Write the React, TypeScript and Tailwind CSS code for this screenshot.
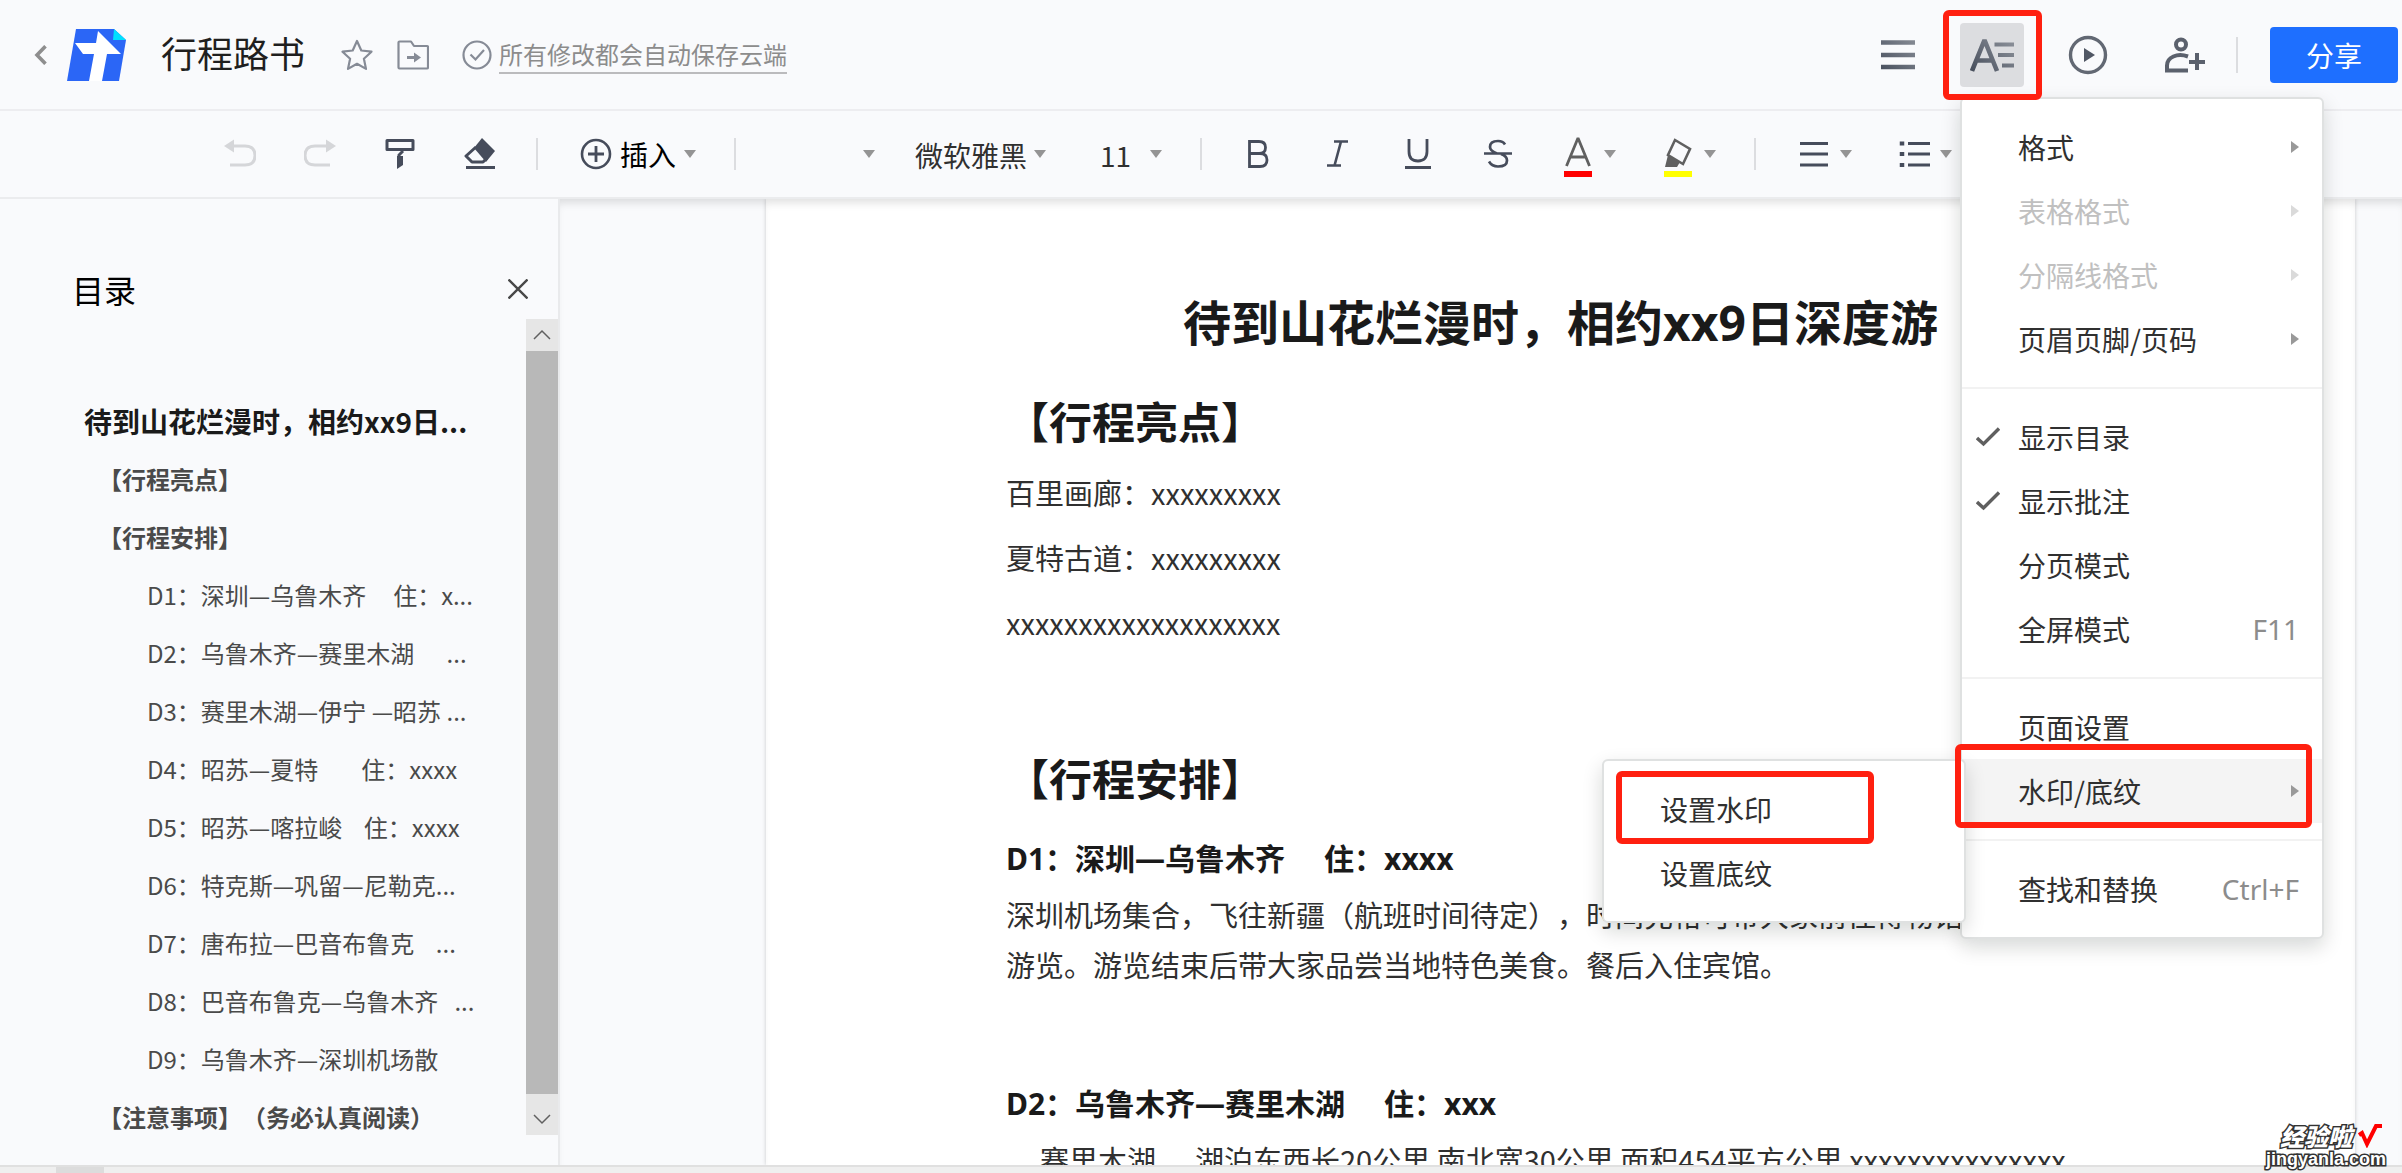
import type { ReactNode } from "react";

const outline = [
  { level: 1, text: "待到山花烂漫时，相约xx9日..." },
  { level: 2, text: "【行程亮点】" },
  { level: 2, text: "【行程安排】" },
  { level: 3, text: "D1：深圳—乌鲁木齐     住：x..." },
  { level: 3, text: "D2：乌鲁木齐—赛里木湖      ..." },
  { level: 3, text: "D3：赛里木湖—伊宁 —昭苏 ..." },
  { level: 3, text: "D4：昭苏—夏特        住：xxxx" },
  { level: 3, text: "D5：昭苏—喀拉峻    住：xxxx" },
  { level: 3, text: "D6：特克斯—巩留—尼勒克..." },
  { level: 3, text: "D7：唐布拉—巴音布鲁克    ..." },
  { level: 3, text: "D8：巴音布鲁克—乌鲁木齐   ..." },
  { level: 3, text: "D9：乌鲁木齐—深圳机场散" },
  { level: 2, text: "【注意事项】（务必认真阅读）" },
];

const outlineStyle: Record<number, string> = {
  1: "pl-[84px] text-[28px] font-bold text-[#1a1a1a]",
  2: "pl-[98px] text-2xl font-bold text-[#4a4a4a]",
  3: "pl-[147px] text-2xl text-[#4a4a4a]",
};

function Caret() {
  return (
    <svg viewBox="0 0 12 8" className="h-2 w-3 shrink-0" fill="#949494" aria-hidden="true">
      <path d="M0 0h12L6 8z" />
    </svg>
  );
}

function Divider({ className }: { className: string }) {
  return <div className={`h-8 w-0.5 shrink-0 bg-[#dcdde0] ${className}`} />;
}

function Icon({ children, color = "#464c5b" }: { children: ReactNode; color?: string }) {
  return (
    <svg viewBox="0 0 32 32" className="size-8 shrink-0" fill="none" stroke={color} strokeWidth="3" aria-hidden="true">
      {children}
    </svg>
  );
}

function ToolButton({ label, children }: { label: string; children: ReactNode }) {
  return (
    <button type="button" aria-label={label} className="flex h-16 w-16 shrink-0 items-center justify-center">
      {children}
    </button>
  );
}

function ColorTool({ label, children }: { label: string; children: ReactNode }) {
  return (
    <button type="button" aria-label={label} className="flex h-16 shrink-0 items-center gap-2.5">
      {children}
      <Caret />
    </button>
  );
}

function Header() {
  return (
    <header className="flex h-[111px] shrink-0 items-center border-b-2 border-[#ededf0] pr-1 pl-[34px]">
      <button type="button" aria-label="返回" className="mr-5 shrink-0">
        <svg viewBox="0 0 13 20" className="h-5 w-[13px]" fill="none" stroke="#8e8e8e" strokeWidth="3.6">
          <path d="M11.5 1.2 3 10l8.500 8.800" />
        </svg>
      </button>
      <svg viewBox="0 0 60 52" className="h-[52px] w-[60px] shrink-0" aria-hidden="true">
        <path d="M9 0h38l12 11-7 41H0z" fill="#2b66f6" />
        <path d="M47 0l12 11H46z" fill="#00e0ff" />
        <path d="M31 2l23 23H40l-5 27H22l5-27H16L8 14h21z" fill="#fff" />
      </svg>
      <h1 className="mr-9 ml-[34px] pb-1.5 text-[36px] leading-[48px] whitespace-nowrap text-[#1f1f1f]">行程路书</h1>
      <button type="button" aria-label="收藏" className="shrink-0">
        <svg viewBox="0 0 32 32" className="size-8" fill="none" stroke="#868b96" strokeWidth="2.200" strokeLinejoin="round">
          <path d="M16 2l4.300 9.500 10.200 1.200-7.600 7 2.100 10.200L16 24.800 7 29.900l2.100-10.200-7.600-7 10.200-1.200z" />
        </svg>
      </button>
      <button type="button" aria-label="移动到文件夹" className="ml-6 shrink-0">
        <svg viewBox="0 0 32 32" className="size-8" fill="none" stroke="#868b96" strokeWidth="2.200" strokeLinejoin="round">
          <path d="M1.500 3.500q0-1 1-1H14l3 4.500h13q1 0 1 1v20.500q0 1-1 1H2.500q-1 0-1-1z" />
          <path d="M10 18.500h8" strokeWidth="3" />
          <path d="M17 13.500v10l7-5z" fill="#868b96" stroke="none" />
        </svg>
      </button>
      <svg viewBox="0 0 32 32" className="ml-8 size-8 shrink-0" fill="none" stroke="#868b96" strokeWidth="2.200" aria-hidden="true">
        <circle cx="16" cy="16" r="13.500" />
        <path d="M9.500 15.500l5 5 8.500-9.500" />
      </svg>
      <a href="#history" className="ml-1.5 border-b-2 border-[#bbbbbd] text-2xl leading-[36px] whitespace-nowrap text-[#8c8c8c]">
        所有修改都会自动保存云端
      </a>

      <div className="ml-auto flex shrink-0 items-center">
        <button type="button" aria-label="菜单" className="mr-11 shrink-0">
          <svg viewBox="0 0 36 32" className="h-8 w-9" fill="none" strokeWidth="4.500">
            <defs>
              <linearGradient id="ink" gradientUnits="userSpaceOnUse" x1="0" y1="36" x2="36" y2="0">
                <stop offset="0" stopColor="#434b59" />
                <stop offset="1" stopColor="#888d96" />
              </linearGradient>
            </defs>
            <path d="M1 3.500h34M1 16h34M1 28h34" stroke="url(#ink)" />
          </svg>
        </button>
        <div className="relative mr-10 shrink-0">
          <button type="button" aria-label="格式菜单" aria-expanded="true" className="flex size-16 items-center justify-center rounded bg-[#dcdde0]">
            <svg viewBox="0 0 44 36" className="h-9 w-11" fill="none" stroke="url(#ink)">
              <path d="M2 34 14.500 3 27 34M7 23.500h15" strokeWidth="4.600" strokeLinejoin="bevel" />
              <path d="M24.500 7.500H44M28 18h16M32 28.500h12" strokeWidth="4.200" />
            </svg>
          </button>
          <div className="absolute top-[74px] left-0 z-20 w-[364px]">
            <FormatMenu />
          </div>
          <Mark className="-top-[13px] -left-[17px] z-30 h-[90px] w-[99px]" />
        </div>
        <button type="button" aria-label="播放" className="mr-[52px] shrink-0">
          <svg viewBox="0 0 48 48" className="size-12" fill="none">
            <circle cx="24" cy="24" r="17.500" stroke="#626873" strokeWidth="3.400" />
            <path d="M20 17v14l11-7z" fill="#505764" />
          </svg>
        </button>
        <button type="button" aria-label="邀请协作者" className="mr-[30px] shrink-0">
          <svg viewBox="0 0 42 38" className="h-[38px] w-[42px]" fill="none" stroke="#5b616d" strokeWidth="4">
            <circle cx="17" cy="8.500" r="5" />
            <path d="M24 20.500c-11-4-21 1-21 9v5h21M33 17v17M25 26h16" />
          </svg>
        </button>
        <div className="mr-8 h-9 w-0.5 bg-[#dcdde0]" />
        <button type="button" className="h-14 w-32 rounded bg-[#1e6fff] text-[28px] text-white">
          分享
        </button>
      </div>
    </header>
  );
}

function Mark({ className }: { className: string }) {
  return <div className={`pointer-events-none absolute rounded-md border-6 border-[#ff2010] ${className}`} />;
}

type Item = { label: string; arrow?: boolean; disabled?: boolean; checked?: boolean; shortcut?: string; active?: boolean };

const sections: Item[][] = [
  [
    { label: "格式", arrow: true },
    { label: "表格格式", arrow: true, disabled: true },
    { label: "分隔线格式", arrow: true, disabled: true },
    { label: "页眉页脚/页码", arrow: true },
  ],
  [
    { label: "显示目录", checked: true },
    { label: "显示批注", checked: true },
    { label: "分页模式" },
    { label: "全屏模式", shortcut: "F11" },
  ],
  [{ label: "页面设置" }, { label: "水印/底纹", arrow: true, active: true }],
  [{ label: "查找和替换", shortcut: "Ctrl+F" }],
];

const panel = "rounded-md border-2 border-[#dfe1e1] bg-white shadow-[0_8px_20px_rgba(0,20,10,0.16)]";

function MenuItem({ item }: { item: Item }) {
  return (
    <button
      type="button"
      role="menuitem"
      disabled={item.disabled}
      className={`flex h-16 w-full items-center pr-[23px] pl-3.5 text-[28px] ${item.active ? "bg-[#f4f4f4]" : ""} ${item.disabled ? "text-[#c0c0c0]" : "text-[#303030]"}`}
    >
      <span className="w-[42px] shrink-0">
        {item.checked && (
          <svg viewBox="0 0 24 20" className="h-5 w-6" fill="none" stroke="#5f5f5f" strokeWidth="3.400">
            <path d="M1 11l6.500 6L23 1.500" />
          </svg>
        )}
      </span>
      <span className="whitespace-nowrap">{item.label}</span>
      {item.shortcut && <span className='ml-auto font-["Noto_Sans",sans-serif] text-[#8c8c8c]'>{item.shortcut}</span>}
      {item.arrow && (
        <svg viewBox="0 0 8 12" className="ml-auto h-3 w-2" fill={item.disabled ? "#dadada" : "#999"} aria-hidden="true">
          <path d="M0 0l8 6-8 6z" />
        </svg>
      )}
    </button>
  );
}

function FormatMenu() {
  return (
    <div role="menu" className={`${panel} py-4`}>
      {sections.map((items, i) => (
        <div key={i} className={i > 0 ? "mt-4 border-t-2 border-[#f2f2f2] pt-4" : ""}>
          {items.map((item) => (
            <div key={item.label} className="relative">
              <MenuItem item={item} />
              {item.active && (
                <>
                  <div className="absolute top-0 right-full z-10 -mr-1 w-[364px]">
                    <Submenu />
                  </div>
                  <Mark className="-top-[15px] -left-[7px] z-20 h-[84px] w-[357px]" />
                </>
              )}
            </div>
          ))}
        </div>
      ))}
    </div>
  );
}

function Submenu() {
  return (
    <div role="menu" className={`${panel} py-4`}>
      <div className="relative">
        <MenuItem item={{ label: "设置水印" }} />
        <Mark className="-top-1.5 left-3 h-[73px] w-[258px]" />
      </div>
      <MenuItem item={{ label: "设置底纹" }} />
    </div>
  );
}

function Toolbar() {
  return (
    <div className="relative flex h-[88px] shrink-0 items-center overflow-hidden border-b-2 border-[#ebecee] pl-[208px] text-[28px] text-[#303030]">
      <div className="flex gap-4">
        <ToolButton label="撤销">
          <Icon color="#d5d6d9">
            <path d="M7 8h14q10 0 10 9.500T21 27H6" />
            <path d="M10 1.500v13L0 8z" fill="#d5d6d9" stroke="none" />
          </Icon>
        </ToolButton>
        <ToolButton label="重做">
          <Icon color="#d5d6d9">
            <path d="M25 8H11Q1 8 1 17.500T11 27h15" />
            <path d="M22 1.500v13L32 8z" fill="#d5d6d9" stroke="none" />
          </Icon>
        </ToolButton>
        <ToolButton label="格式刷">
          <Icon>
            <path d="M3 2.500h26v9H3z" strokeWidth="3" strokeLinejoin="round" />
            <path d="M19 13l-4 4v3" />
            <path d="M13 18h6v9l-6 4z" fill="#464c5b" stroke="none" />
          </Icon>
        </ToolButton>
        <ToolButton label="清除格式">
          <Icon>
            <path d="M18 0l13 13-9 11L10 10z" fill="#464c5b" stroke="none" />
            <path d="M12 9l-10 9 6 6h11l4-4" strokeLinejoin="round" />
            <path d="M2 29.500h29" />
          </Icon>
        </ToolButton>
      </div>
      <Divider className="mx-6" />
      <button type="button" className="ml-[18px] flex shrink-0 items-center gap-2 text-black">
        <Icon>
          <circle cx="16" cy="16" r="14" strokeWidth="2.600" />
          <path d="M16 8v16M8 16h16" strokeWidth="2.800" />
        </Icon>
        插入
        <Caret />
      </button>
      <Divider className="ml-[38px]" />
      <label className="flex shrink-0 items-center">
        <select aria-label="样式" className="h-10 w-[127px] appearance-none" />
        <Caret />
      </label>
      <label className="ml-10 flex shrink-0 items-center">
        <select aria-label="字体" className="h-10 w-[119px] appearance-none">
          <option>微软雅黑</option>
        </select>
        <Caret />
      </label>
      <label className="ml-[54px] flex shrink-0 items-center">
        <select aria-label="字号" className="h-10 w-[50px] appearance-none">
          <option>11</option>
        </select>
        <Caret />
      </label>
      <Divider className="mr-6 ml-[38px]" />
      <div className="flex shrink-0 gap-4">
        <ToolButton label="加粗">
          <Icon>
            <path d="M7.500 3.500h9.500q6.500 0 6.500 6t-6.500 6H7.500zM7.500 15.500h10.500q7 0 7 6.500t-7 6.500H7.500z" strokeWidth="2.800" />
          </Icon>
        </ToolButton>
        <ToolButton label="斜体">
          <Icon>
            <path d="M12 3.500h14M5 27.500h14M19 3.500l-6.500 24" strokeWidth="2.600" />
          </Icon>
        </ToolButton>
        <ToolButton label="下划线">
          <Icon>
            <path d="M7 1v12.500q0 9.500 9 9.500t9-9.500V1M3 29.500h26" strokeWidth="2.800" />
          </Icon>
        </ToolButton>
        <ToolButton label="删除线">
          <Icon>
            <path d="M23 6.500Q21 3 16 3 8 3 8 9q0 4 7 6.500M2 15.500h28M19 16q6 2 6 6.500 0 6-9 6-6 0-9-5" strokeWidth="2.700" />
          </Icon>
        </ToolButton>
      </div>
      <div className="ml-8 flex gap-[46px]">
        <ColorTool label="字体颜色">
          <span className="flex flex-col items-center">
            <svg viewBox="0 0 32 32" className="mt-1.5 size-8" fill="none" stroke="#606060" strokeWidth="2.800">
              <path d="M4.500 29 16 1l11.500 28M8.500 20h15" strokeLinejoin="bevel" />
            </svg>
            <span className="mt-0.5 h-1.5 w-7 bg-[#ff0000]" />
          </span>
        </ColorTool>
        <ColorTool label="突出显示">
          <span className="flex flex-col items-center">
            <svg viewBox="0 0 32 32" className="mt-1.5 size-8" fill="none" stroke="#606060" strokeWidth="2.600">
              <path d="M13 3l15 9-7 15-15-9z" />
              <path d="M6 18l12 7-3 5H3z" fill="#606060" stroke="none" />
            </svg>
            <span className="mt-0.5 h-1.5 w-7 bg-[#ffff00]" />
          </span>
        </ColorTool>
      </div>
      <Divider className="ml-[38px]" />
      <div className="ml-[42px] flex gap-[46px]">
        <ColorTool label="对齐方式">
          <Icon>
            <path d="M2 5.500h28M2 16h28M2 27h28" strokeWidth="2.800" />
          </Icon>
        </ColorTool>
        <ColorTool label="项目符号">
          <Icon>
            <path d="M10 5.500h22M10 16h22M10 27h22" strokeWidth="2.800" />
            <path d="M4 3.500v4M4 14v4M4 25v4" strokeWidth="4.500" />
          </Icon>
        </ColorTool>
      </div>
    </div>
  );
}

function Sidebar() {
  return (
    <aside className="flex w-[560px] shrink-0 flex-col border-r-2 border-[#e9eaec] pt-[62px]">
      <div className="mb-0.5 flex h-14 shrink-0 items-center justify-between pr-[30px] pl-[72px]">
        <h2 className="text-[32px] leading-10 text-black">目录</h2>
        <button type="button" aria-label="关闭目录" className="shrink-0">
          <svg viewBox="0 0 20 20" className="size-5" fill="none" stroke="#484848" strokeWidth="2.400">
            <path d="M.5.5l19 19M19.500.5l-19 19" />
          </svg>
        </button>
      </div>
      <div className="flex min-h-0 flex-1">
        <nav aria-label="目录" className="min-w-0 flex-1 overflow-hidden pt-[73px]">
          {outline.map((o) => (
            <a key={o.text} href="#section" className={`block h-[58px] leading-[58px] whitespace-pre ${outlineStyle[o.level]}`}>
              {o.text}
            </a>
          ))}
        </nav>
        <div className="mb-[30px] flex w-8 shrink-0 flex-col bg-[#e6e6e6]">
          <svg viewBox="0 0 32 32" className="size-8 shrink-0" fill="none" stroke="#606060" strokeWidth="1.500">
            <path d="M8 20l8-8 8 8" />
          </svg>
          <div className="flex-1 bg-[#b8b8b8]" />
          <svg viewBox="0 0 32 41" className="h-[41px] w-8 shrink-0" fill="none" stroke="#606060" strokeWidth="1.500">
            <path d="M8 21l8 8 8-8" />
          </svg>
        </div>
      </div>
    </aside>
  );
}

const heading = 'font-bold text-[#1a1a1a] font-["Noto_Sans","Noto_Sans_CJK_SC",sans-serif]';

function DocPage() {
  return (
    <main className="flex min-w-0 flex-1 overflow-hidden pr-[47px] pl-[206px] shadow-[inset_0_8px_8px_-4px_rgba(0,0,0,0.12)]">
      <article className="min-w-0 flex-1 bg-white px-[240px] pt-[92px] text-[29px] leading-[50px] whitespace-pre text-[#303030] shadow-[0_0_4px_rgba(0,0,0,0.2),inset_0_8px_8px_-4px_rgba(0,0,0,0.12)]">
        <h1 className={`text-center text-[48px] leading-[64px] ${heading}`}>待到山花烂漫时，相约xx9日深度游</h1>
        <h2 className={`mt-9 text-[43px] leading-[64px] ${heading}`}>【行程亮点】</h2>
        <div className="mt-[5px] leading-[65px]">
          <p>百里画廊：xxxxxxxxx</p>
          <p>夏特古道：xxxxxxxxx</p>
          <p>xxxxxxxxxxxxxxxxxxx</p>
        </div>
        <h2 className={`mt-[93px] text-[43px] leading-[64px] ${heading}`}>【行程安排】</h2>
        <h3 className={`mt-[22px] text-[30px] ${heading}`}>D1：深圳—乌鲁木齐     住：xxxx</h3>
        <div className="mt-[5px]">
          <p>深圳机场集合，飞往新疆（航班时间待定），时间充裕可带大家前往博物馆</p>
          <p>游览。游览结束后带大家品尝当地特色美食。餐后入住宾馆。</p>
        </div>
        <h3 className={`mt-[90px] text-[30px] ${heading}`}>D2：乌鲁木齐—赛里木湖     住：xxx</h3>
        <p className="mt-[5px] pl-[34px]">赛里木湖      湖泊东西长20公里 南北宽30公里 面积454平方公里 xxxxxxxxxxxxxxx</p>
      </article>
    </main>
  );
}

export default function App() {
  return (
    <div className='relative flex h-screen flex-col overflow-hidden bg-[#f9fafc] font-["Noto_Sans_CJK_SC",sans-serif] [text-spacing-trim:space-all]'>
      <Header />
      <Toolbar />
      <div className="flex min-h-0 flex-1">
        <Sidebar />
        <DocPage />
      </div>
      <div className="h-2 shrink-0 border-t-2 border-[#e0e0e0] bg-[#efefef] pl-14">
        <div className="h-full w-12 bg-[#dcdcdc]" />
      </div>
      <div className="absolute right-4 bottom-1 flex flex-col items-end font-black text-white [-webkit-text-stroke:3px_#333] [paint-order:stroke_fill]">
        <div className="flex items-center gap-1.5 pr-1">
          <span className="text-2xl leading-[26px] italic">经验啦</span>
          <svg viewBox="0 0 24 24" className="size-6" fill="none" stroke="#ff0000" strokeWidth="4" aria-hidden="true">
            <path d="M1 11l3-2 5 11L18 2h6" />
          </svg>
        </div>
        <span className='font-["Liberation_Sans",sans-serif] text-lg leading-5 font-bold'>jingyanla.com</span>
      </div>
    </div>
  );
}
